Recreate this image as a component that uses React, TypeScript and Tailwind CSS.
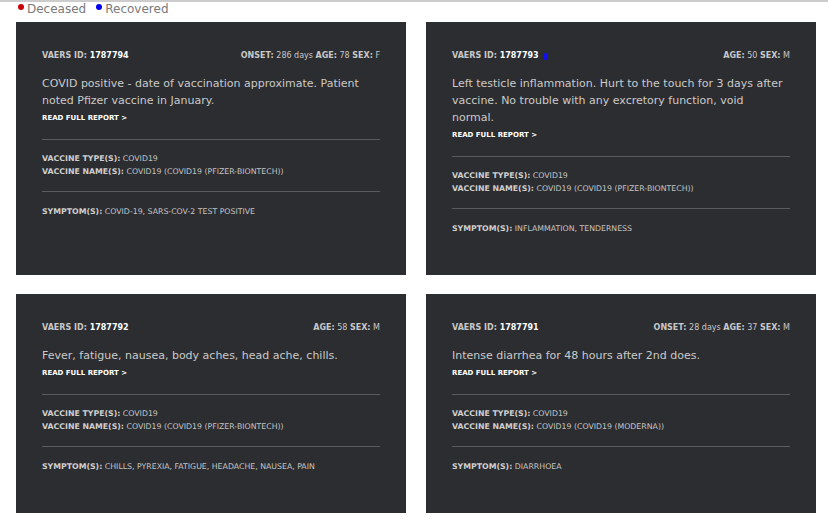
const reports = [
  {
    id: '1787794',
    onset: '286 days',
    age: '78',
    sex: 'F',
    recovered: false,
    text: 'COVID positive - date of vaccination approximate. Patient noted Pfizer vaccine in January.',
    type: 'COVID19',
    name: 'COVID19 (COVID19 (PFIZER-BIONTECH))',
    symptoms: 'COVID-19, SARS-COV-2 TEST POSITIVE',
  },
  {
    id: '1787793',
    onset: '',
    age: '50',
    sex: 'M',
    recovered: true,
    text: 'Left testicle inflammation. Hurt to the touch for 3 days after vaccine. No trouble with any excretory function, void normal.',
    type: 'COVID19',
    name: 'COVID19 (COVID19 (PFIZER-BIONTECH))',
    symptoms: 'INFLAMMATION, TENDERNESS',
  },
  {
    id: '1787792',
    onset: '',
    age: '58',
    sex: 'M',
    recovered: false,
    text: 'Fever, fatigue, nausea, body aches, head ache, chills.',
    type: 'COVID19',
    name: 'COVID19 (COVID19 (PFIZER-BIONTECH))',
    symptoms: 'CHILLS, PYREXIA, FATIGUE, HEADACHE, NAUSEA, PAIN',
  },
  {
    id: '1787791',
    onset: '28 days',
    age: '37',
    sex: 'M',
    recovered: false,
    text: 'Intense diarrhea for 48 hours after 2nd does.',
    type: 'COVID19',
    name: 'COVID19 (COVID19 (MODERNA))',
    symptoms: 'DIARRHOEA',
  },
]

type Report = (typeof reports)[number]

function Card({ r }: { r: Report }) {
  return (
    <div className="bg-[#2c2d30] pt-[28px] px-[26px] pb-[40px]">
      <div className="flex justify-between text-[8px] leading-[12px] text-[#c8c8c8]">
        <div className="flex items-center">
          <span className="font-bold">VAERS ID:&nbsp;</span>
          <span className="font-bold text-white">{r.id}</span>
          {r.recovered && <span className="ml-[4px] w-[5px] h-[7px] rounded-full bg-[#1010ee]" />}
        </div>
        <div>
          {r.onset && (
            <>
              <span className="font-bold">ONSET:</span> {r.onset}{' '}
            </>
          )}
          <span className="font-bold">AGE:</span> {r.age} <span className="font-bold">SEX:</span> {r.sex}
        </div>
      </div>
      <p className="mt-[13px] pr-[3px] text-[11px] leading-[17px] text-[#cacaca]">{r.text}</p>
      <a className="block mt-[4px] text-[7px] leading-[10px] font-bold text-white">READ FULL REPORT &gt;</a>
      <div className="mt-[16px] border-t border-[#5a5b5e]" />
      <div className="mt-[12px] text-[7.8px] leading-[13px] text-[#c4c4c4]">
        <div>
          <span className="font-bold text-[#d0d0d0]">VACCINE TYPE(S):</span> {r.type}
        </div>
        <div>
          <span className="font-bold text-[#d0d0d0]">VACCINE NAME(S):</span> {r.name}
        </div>
      </div>
      <div className="mt-[13px] border-t border-[#5a5b5e]" />
      <div className="mt-[13px] text-[7.8px] leading-[13px] text-[#c4c4c4]">
        <span className="font-bold text-[#d0d0d0]">SYMPTOM(S):</span> {r.symptoms}
      </div>
    </div>
  )
}

export default function App() {
  return (
    <div className="w-[828px] h-[525px] bg-white border-t-2 border-[#cccccc] font-['DejaVu_Sans',sans-serif] overflow-hidden">
      <div className="flex items-center pl-[18px] h-[14px] text-[12px] text-[#7a7a7a]">
        <span className="w-[6px] h-[6px] rounded-full bg-[#cc0000] mr-[3px] -mt-[4px]" />
        <span>Deceased</span>
        <span className="w-[6px] h-[6px] rounded-full bg-[#0000ee] ml-[10px] mr-[3px] -mt-[4px]" />
        <span>Recovered</span>
      </div>
      <div className="grid grid-cols-[390px_390px] gap-x-[20px] gap-y-[19px] pl-[16px] pt-[6px]">
        {reports.map((r) => (
          <Card key={r.id} r={r} />
        ))}
      </div>
    </div>
  )
}
